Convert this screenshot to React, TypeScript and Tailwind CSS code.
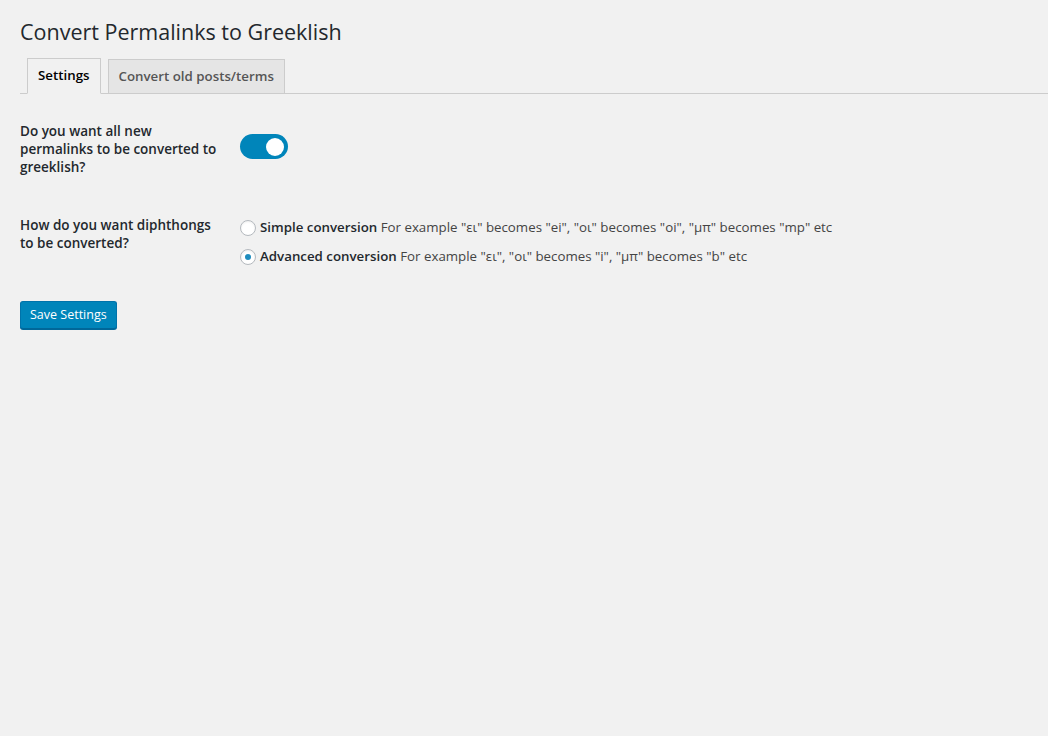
import { useState } from 'react';

const font = "font-['Open_Sans','Noto_Sans',sans-serif]";

export default function App() {
  const [enabled, setEnabled] = useState(true);
  const [mode, setMode] = useState<'simple' | 'advanced'>('advanced');

  return (
    <div className={`min-h-[736px] w-full bg-[#f1f1f1] text-[#444] ${font}`}>
      <div className="pl-5 pt-[17px]">
        <h1 className="text-[21.5px] leading-[29px] font-normal text-[#23282d]">
          Convert Permalinks to Greeklish
        </h1>

        {/* Tabs */}
        <div className="mt-[12px] flex items-end border-b border-[#ccc] pl-[7px]">
          <button className="-mb-px h-[36px] border border-[#ccc] border-b-[#f1f1f1] bg-[#f1f1f1] px-[10px] text-[13.3px] font-semibold text-black">
            Settings
          </button>
          <button className="-mb-px ml-[7px] h-[35px] border border-[#ccc] bg-[#e5e5e5] px-[10px] text-[13.3px] font-semibold text-[#555]">
            Convert old posts/terms
          </button>
        </div>

        {/* Form table */}
        <div className="mt-[28px] flex">
          <div className="w-[220px] pr-4 text-[13.5px] font-semibold leading-[18px] text-[#23282d]">
            Do you want all new permalinks to be converted to greeklish?
          </div>
          <div className="pt-[6px]">
            <button
              onClick={() => setEnabled(!enabled)}
              className={`mt-[6px] flex h-[25px] w-[48px] items-center rounded-full px-[4px] ${
                enabled ? 'justify-end bg-[#0085ba]' : 'justify-start bg-[#ccc]'
              }`}
            >
              <span className="block h-[18px] w-[18px] rounded-full bg-white" />
            </button>
          </div>
        </div>

        <div className="mt-[40px] flex">
          <div className="w-[220px] pr-4 text-[13.5px] font-semibold leading-[18px] text-[#23282d]">
            How do you want diphthongs to be converted?
          </div>
          <div className="flex flex-col gap-[13px] pt-[4px] text-[13.3px] text-[#444]">
            {[
              {
                key: 'simple' as const,
                title: 'Simple conversion',
                text: 'For example "ει" becomes "ei", "οι" becomes "oi", "μπ" becomes "mp" etc',
              },
              {
                key: 'advanced' as const,
                title: 'Advanced conversion',
                text: 'For example "ει", "οι" becomes "i", "μπ" becomes "b" etc',
              },
            ].map((opt) => (
              <label key={opt.key} className="flex h-[16px] items-center gap-[4px]" onClick={() => setMode(opt.key)}>
                <span className="flex h-[16px] w-[16px] items-center justify-center rounded-full border border-[#b4b9be] bg-white shadow-[inset_0_1px_2px_rgba(0,0,0,0.07)]">
                  {mode === opt.key && <span className="block h-[6px] w-[6px] rounded-full bg-[#1e8cbe]" />}
                </span>
                <span>
                  <span className="font-semibold text-[#23282d]">{opt.title}</span> {opt.text}
                </span>
              </label>
            ))}
          </div>
        </div>

        <div className="mt-[36px]">
          <button className="h-[28px] rounded-[3px] border border-[#0073aa] border-b-[#006799] bg-[#0085ba] px-[9px] text-[12.5px] leading-[26px] text-white shadow-[0_1px_0_#006799]">
            Save Settings
          </button>
        </div>
      </div>
    </div>
  );
}
